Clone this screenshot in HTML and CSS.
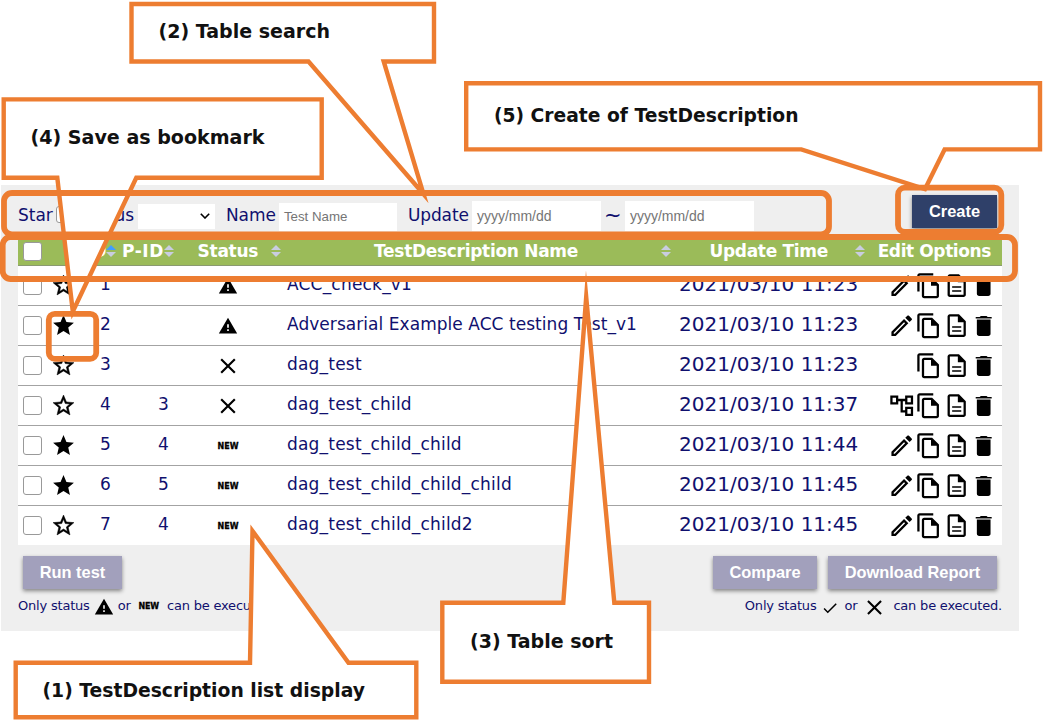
FILE: index.html
```html
<!DOCTYPE html>
<html lang="en">
<head>
<meta charset="utf-8">
<title>TestDescription list</title>
<link rel="stylesheet" href="styles.css">
</head>
<body>
<svg class="defs" width="0" height="0">
  <symbol id="star" viewBox="0 0 24 24"><path d="M12 17.27 18.18 21l-1.64-7.03L22 9.24l-7.19-.61L12 2 9.19 8.63 2 9.24l5.46 4.73L5.82 21z"/></symbol>
  <symbol id="star-o" viewBox="0 0 24 24"><path class="bold" d="M22 9.24l-7.19-.62L12 2 9.19 8.63 2 9.24l5.46 4.73L5.82 21 12 17.27 18.18 21l-1.63-7.03L22 9.24zM12 15.4l-3.76 2.27 1-4.28-3.32-2.88 4.38-.38L12 6.1l1.71 4.04 4.38.38-3.32 2.88 1 4.28L12 15.4z"/></symbol>
  <symbol id="warn" viewBox="0 0 24 24"><path d="M1 21h22L12 2 1 21zm12-3h-2v-2h2v2zm0-4h-2v-4h2v4z"/></symbol>
  <symbol id="close" viewBox="0 0 24 24"><path d="M19 6.41 17.59 5 12 10.59 6.41 5 5 6.41 10.59 12 5 17.59 6.41 19 12 13.41 17.59 19 19 17.59 13.41 12z"/></symbol>
  <symbol id="check" viewBox="0 0 24 24"><path d="M9 16.17 4.83 12l-1.42 1.41L9 19 21 7l-1.41-1.41z"/></symbol>
  <symbol id="edit" viewBox="0 0 24 24"><path d="M14.06 9.02l.92.92L5.92 19H5v-.92l9.06-9.06M17.66 3c-.25 0-.51.1-.7.29l-1.83 1.83 3.75 3.75 1.83-1.83c.39-.39.39-1.02 0-1.41l-2.34-2.34c-.2-.2-.45-.29-.71-.29zm-3.6 3.19L3 17.25V21h3.75L17.81 9.94l-3.75-3.75z"/></symbol>
  <symbol id="copy" viewBox="0 0 24 24"><path d="M16 1H4c-1.1 0-2 .9-2 2v14h2V3h12V1zm-1 4H8c-1.1 0-1.99.9-1.99 2L6 21c0 1.1.89 2 1.99 2H19c1.1 0 2-.9 2-2V11l-6-6zM8 21V7h6v5h5v9H8z"/></symbol>
  <symbol id="doc" viewBox="0 0 24 24"><path d="M8 16h8v1.4H8zm0-3.6h8v1.4H8zm6-10.4H6c-1.1 0-2 .9-2 2v16c0 1.1.89 2 1.99 2H18c1.1 0 2-.9 2-2V8l-6-6zm4 18H6V4h7v5h5v11z"/></symbol>
  <symbol id="trash" viewBox="0 0 24 24"><path d="M6 19c0 1.1.9 2 2 2h8c1.1 0 2-.9 2-2V7H6v12zM19 4.4h-3.5l-1-1h-5l-1 1H5v1.4h14V4.4z"/><path class="lid" d="M6 5.8h12V7H6z"/></symbol>
  <symbol id="tree" viewBox="0 0 24 24"><path d="M22 11V3h-7v3H9V3H2v8h7V8h2v10h4v3h7v-8h-7v3h-2V8h2v3h7zM7 9H4V5h3v4zm10 6h3v4h-3v-4zm0-10h3v4h-3V5z"/></symbol>
  <symbol id="sort" viewBox="0 0 10 12"><path d="M0 5 5 0l5 5z"/><path d="M0 7h10l-5 5z"/></symbol>
</svg>

<main class="panel">
  <div class="filters">
    <span>Star</span><i class="box star-box"></i>
    <span class="f-status">Status</span>
    <div class="select"><svg viewBox="0 0 10 6"><path d="M.8.8 5 5 9.2.8"/></svg></div>
    <span class="f-name">Name</span><div class="input name-input">Test Name</div>
    <span class="f-update">Update</span><div class="input date">yyyy/mm/dd</div>
    <span class="tilde">~</span><div class="input date">yyyy/mm/dd</div>
    <button class="btn create">Create</button>
  </div>

  <div class="table">
    <div class="row head">
      <div class="c-check"><i class="box"></i></div>
      <div></div>
      <div class="h-cell"><b>ID</b><svg class="sort" viewBox="0 0 10 12"><path class="asc" d="M0 5 5 0l5 5z"/><path d="M0 7h10l-5 5z"/></svg></div>
      <div class="h-cell h-pid"><b>P-ID</b><svg class="sort"><use href="#sort"/></svg></div>
      <div class="h-cell h-status"><b>Status</b><svg class="sort"><use href="#sort"/></svg></div>
      <div class="h-cell h-name"><b>TestDescription Name</b><svg class="sort"><use href="#sort"/></svg></div>
      <div class="h-cell h-time"><b>Update Time</b><svg class="sort"><use href="#sort"/></svg></div>
      <div class="h-cell h-opt"><b>Edit Options</b></div>
    </div>
    <div class="row">
      <div class="c-check"><i class="box"></i></div><div><svg class="star"><use href="#star-o"/></svg></div>
      <div class="num">1</div><div class="num"></div><div class="status"><svg class="warn"><use href="#warn"/></svg></div>
      <div class="name">ACC_check_v1</div><div class="time">2021/03/10 11:23</div>
      <div class="opts"><svg><use href="#edit"/></svg><svg><use href="#copy"/></svg><svg><use href="#doc"/></svg><svg><use href="#trash"/></svg></div>
    </div>
    <div class="row">
      <div class="c-check"><i class="box"></i></div><div><svg class="star"><use href="#star"/></svg></div>
      <div class="num">2</div><div class="num"></div><div class="status"><svg class="warn"><use href="#warn"/></svg></div>
      <div class="name long">Adversarial Example ACC testing Test_v1</div><div class="time">2021/03/10 11:23</div>
      <div class="opts"><svg><use href="#edit"/></svg><svg><use href="#copy"/></svg><svg><use href="#doc"/></svg><svg><use href="#trash"/></svg></div>
    </div>
    <div class="row">
      <div class="c-check"><i class="box"></i></div><div><svg class="star"><use href="#star-o"/></svg></div>
      <div class="num">3</div><div class="num"></div><div class="status"><svg class="close"><use href="#close"/></svg></div>
      <div class="name">dag_test</div><div class="time">2021/03/10 11:23</div>
      <div class="opts"><svg><use href="#copy"/></svg><svg><use href="#doc"/></svg><svg><use href="#trash"/></svg></div>
    </div>
    <div class="row">
      <div class="c-check"><i class="box"></i></div><div><svg class="star"><use href="#star-o"/></svg></div>
      <div class="num">4</div><div class="num">3</div><div class="status"><svg class="close"><use href="#close"/></svg></div>
      <div class="name">dag_test_child</div><div class="time">2021/03/10 11:37</div>
      <div class="opts"><svg><use href="#tree"/></svg><svg><use href="#copy"/></svg><svg><use href="#doc"/></svg><svg><use href="#trash"/></svg></div>
    </div>
    <div class="row">
      <div class="c-check"><i class="box"></i></div><div><svg class="star"><use href="#star"/></svg></div>
      <div class="num">5</div><div class="num">4</div><div class="status"><span class="new">NEW</span></div>
      <div class="name">dag_test_child_child</div><div class="time">2021/03/10 11:44</div>
      <div class="opts"><svg><use href="#edit"/></svg><svg><use href="#copy"/></svg><svg><use href="#doc"/></svg><svg><use href="#trash"/></svg></div>
    </div>
    <div class="row">
      <div class="c-check"><i class="box"></i></div><div><svg class="star"><use href="#star"/></svg></div>
      <div class="num">6</div><div class="num">5</div><div class="status"><span class="new">NEW</span></div>
      <div class="name">dag_test_child_child_child</div><div class="time">2021/03/10 11:45</div>
      <div class="opts"><svg><use href="#edit"/></svg><svg><use href="#copy"/></svg><svg><use href="#doc"/></svg><svg><use href="#trash"/></svg></div>
    </div>
    <div class="row">
      <div class="c-check"><i class="box"></i></div><div><svg class="star"><use href="#star-o"/></svg></div>
      <div class="num">7</div><div class="num">4</div><div class="status"><span class="new">NEW</span></div>
      <div class="name">dag_test_child_child2</div><div class="time">2021/03/10 11:45</div>
      <div class="opts"><svg><use href="#edit"/></svg><svg><use href="#copy"/></svg><svg><use href="#doc"/></svg><svg><use href="#trash"/></svg></div>
    </div>
  </div>

  <div class="actions">
    <button class="btn off run">Run test</button>
    <button class="btn off compare">Compare</button>
    <button class="btn off download">Download Report</button>
  </div>
  <div class="notes">
    <div class="note"><span>Only status</span><svg class="n-warn"><use href="#warn"/></svg><span>or</span><span class="new">NEW</span><span>can be executed.</span></div>
    <div class="note right"><span>Only status</span><svg class="n-check"><use href="#check"/></svg><span>or</span><svg class="n-close"><use href="#close"/></svg><span>can be executed.</span></div>
  </div>
</main>

<svg class="callouts" width="1044" height="723" viewBox="0 0 1044 723">
  <g class="bubble">
    <path d="M131.5 4H434V61.5H383.7L423.5 194 308.5 61.5H131.5z"/>
    <path d="M3.7 99.4H321.7V177.7H136.3L72.8 311.5 57.3 177.7H3.7z"/>
    <path d="M466.2 83.3H1040V149.4H944.6L925 189 801.3 149.4H466.2z"/>
    <path d="M442.3 602.7H563.3L586.2 297 614.3 602.7H649V681.7H442.3z"/>
    <path d="M15.7 662.7H250L252.5 531 348.5 662.7H416.3V717.3H15.7z"/>
  </g>
  <g class="frame">
    <rect x="4" y="193" width="825" height="41.5" rx="8"/>
    <rect x="2.7" y="237" width="1012.3" height="42" rx="8"/>
    <rect x="48.8" y="313.8" width="47.4" height="45" rx="6"/>
    <rect x="898" y="187.7" width="103.3" height="44.3" rx="7"/>
  </g>
  <g class="label">
    <text x="158.5" y="38" textLength="171.5" lengthAdjust="spacingAndGlyphs">(2) Table search</text>
    <text x="30.5" y="144" textLength="234" lengthAdjust="spacingAndGlyphs">(4) Save as bookmark</text>
    <text x="494" y="122" textLength="304.5" lengthAdjust="spacingAndGlyphs">(5) Create of TestDescription</text>
    <text x="470" y="648" textLength="143" lengthAdjust="spacingAndGlyphs">(3) Table sort</text>
    <text x="42.5" y="697" textLength="322.5" lengthAdjust="spacingAndGlyphs">(1) TestDescription list display</text>
  </g>
</svg>
</body>
</html>
```
FILE: styles.css
```css
* { box-sizing: border-box; }
body {
  margin: 0;
  width: 1044px;
  height: 723px;
  padding: 185px 25px 0 1px;
  overflow: hidden;
  background: #fff;
  color: #10106e;
  font: 17px/20px "DejaVu Sans", Verdana, sans-serif;
}
.defs { position: absolute; }
.panel { height: 446px; padding: 0 17px; background: #efefef; }
svg { display: block; flex: none; }
.lid { fill: #888; }
.bold { stroke: #000; stroke-width: .5; }

.filters { display: flex; align-items: center; height: 51px; padding-top: 10px; }
.filters span { flex: none; padding-bottom: 2px; }
.box {
  display: block;
  flex: none;
  width: 19px;
  height: 19px;
  border: 1px solid #999;
  border-radius: 3px;
  background: #fff;
}
.star-box { width: 17px; height: 17px; margin: -3px 0 0 3px; }
.f-status { width: 54px; margin-left: 7px; }
.select {
  display: flex;
  flex: none;
  align-items: center;
  justify-content: flex-end;
  width: 77px;
  height: 25px;
  margin: 1px 0 0 4px;
  padding-right: 5px;
  background: #fff;
}
.select svg { width: 10px; height: 6px; fill: none; stroke: #000; stroke-width: 1.6; }
.f-name { width: 50px; margin-left: 11px; }
.input {
  flex: none;
  height: 30px;
  padding-left: 5px;
  background: #fff;
  color: #757575;
  font: 14px/30px "Liberation Sans", Arial, sans-serif;
}
.name-input { width: 118px; height: 28px; margin: 2px 0 0 3px; font-size: 13.3px; line-height: 27px; }
.f-update { width: 61px; margin-left: 11px; letter-spacing: -.1px; }
.date { width: 129px; margin-left: 3px; }
.tilde { width: 18px; margin-left: 3px; font-size: 21px; }
.btn {
  flex: none;
  height: 33px;
  padding: 0;
  border: 0;
  color: #fff;
  font: bold 16.4px/33px "Liberation Sans", Arial, sans-serif;
  background: #2f4069;
  box-shadow: 0 2px 4px rgba(0, 0, 0, .45);
}
.create { width: 85px; margin: -9px 5px 0 auto; }

.row {
  display: grid;
  grid-template-columns: 31px 27px 40px 60px 107px 391px 195px 133px;
  align-items: center;
  height: 40px;
  border-bottom: 1px solid #a3a3a3;
  background: #fff;
}
.row:last-child { border-bottom: 0; height: 39px; }
.row.head { height: 30px; border-color: #8a9a70; background: #9bbb59; color: #fff; }
.c-check { padding-left: 5px; }
.head .c-check { padding-top: 2px; }
.star { width: 25px; height: 25px; margin-left: 1.5px; }
.num { padding: 0 0 3px 24px; }
.num + .num { padding-left: 42px; }
.status { display: grid; justify-items: center; padding-right: 3px; }
.warn { width: 20px; height: 20px; }
.close { width: 26px; height: 26px; }
.new {
  color: #000;
  font: 900 8px/10px "DejaVu Sans", sans-serif;
  -webkit-text-stroke: .3px #000;
}
.status .new { margin-top: 2px; }
.name { padding: 0 0 3px 4px; white-space: nowrap; letter-spacing: .2px; }
.name.long { letter-spacing: .05px; }
.time { padding: 0 0 3px 5px; font-size: 20px; white-space: nowrap; }
.opts { display: flex; justify-content: flex-end; padding-right: 4.5px; }
.opts svg { width: 27.4px; height: 27.4px; }

.h-cell { display: flex; align-items: center; justify-content: flex-end; white-space: nowrap; letter-spacing: -.3px; }
.sort { width: 10px; height: 12px; margin: 1px 0 0; fill: #c9cde0; }
.asc { fill: #409eff; }
.h-pid { padding-right: 2px; letter-spacing: .6px; }
.h-status { padding-right: 2px; }
.h-status .sort { margin-left: 13px; }
.h-name { padding-right: 3px; }
.h-name .sort { margin-left: 83px; }
.h-time { padding-right: 4px; }
.h-time .sort { margin-left: 27px; }
.h-opt { padding-right: 11px; letter-spacing: -.4px; }

.actions { display: flex; padding: 11px 5px 0; }
.off { background: #a2a0bc; }
.run { width: 99px; margin-right: auto; }
.compare { width: 104px; margin-right: 11px; }
.download { width: 169px; }
.notes { display: flex; justify-content: space-between; margin-top: 5px; font-size: 13px; letter-spacing: -.2px; }
.note { display: flex; align-items: center; height: 24px; white-space: nowrap; }
.n-warn { width: 20px; height: 20px; margin: 2px 4px 0; }
.note .new { margin: 2px 8px 0 8px; }
.n-check { width: 18px; height: 18px; margin: 3px 5px 0; }
.n-close { width: 25px; height: 25px; margin: 2px 6px 0 5px; }

.callouts { position: absolute; left: 0; top: 0; }
.bubble { fill: #fff; stroke: #ed7d31; stroke-width: 4.4; stroke-miterlimit: 30; }
.frame { fill: none; stroke: #ed7d31; stroke-width: 5.8; }
.label { fill: #111; font: bold 19.5px "DejaVu Sans", Verdana, sans-serif; }
```
